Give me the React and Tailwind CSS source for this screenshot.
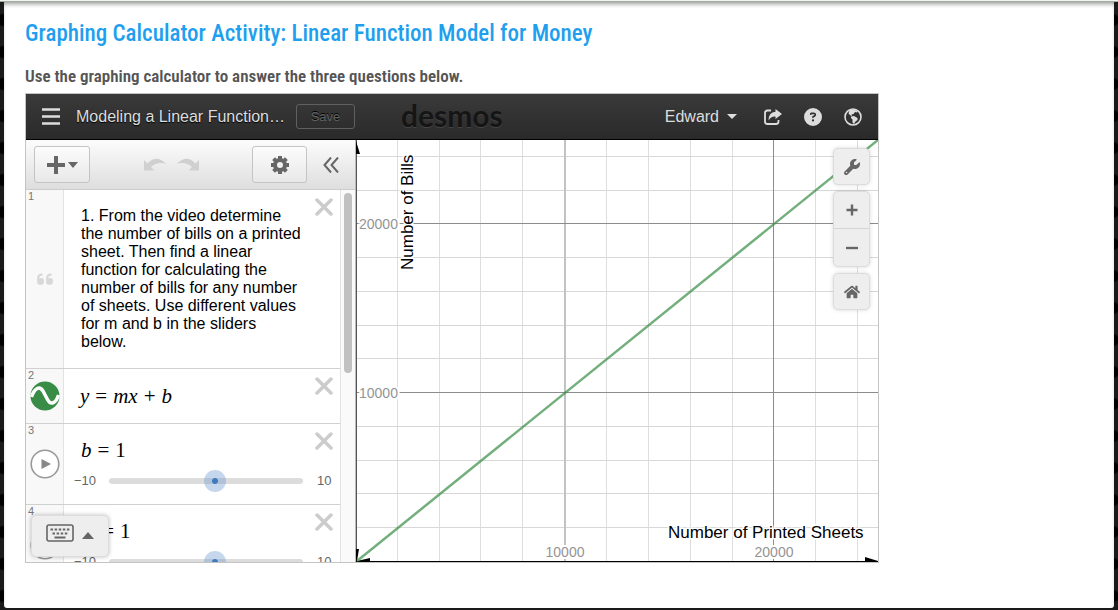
import { useState } from "react";
import { FaHome } from "react-icons/fa";
import { FaGear, FaWrench, FaCircleQuestion, FaQuoteLeft } from "react-icons/fa6";

const MINOR_X = [41, 83, 124, 166, 250, 292, 334, 376, 459, 501];
const MINOR_Y = [16, 50, 117, 151, 185, 218, 286, 320, 353, 387];

function Graph() {
  return (
    <svg
      viewBox="0 0 522 422"
      preserveAspectRatio="xMinYMax slice"
      className="absolute inset-0 h-full w-full"
      role="img"
      aria-label="Number of bills against number of printed sheets"
      fontFamily="'Liberation Sans', Arial, sans-serif"
    >
      {MINOR_X.map((x) => (
        <line key={x} x1={x + 0.5} x2={x + 0.5} y1="0" y2="421" stroke="#dedede" />
      ))}
      {MINOR_Y.map((y) => (
        <line key={y} x1="0" x2="522" y1={y + 0.5} y2={y + 0.5} stroke="#d8d8d8" />
      ))}
      <line x1="209" x2="209" y1="0" y2="421" stroke="#c2c2c2" strokeWidth="2" />
      <line x1="417.5" x2="417.5" y1="0" y2="421" stroke="#8c8c8c" />
      <line x1="0" x2="522" y1="83.5" y2="83.5" stroke="#8c8c8c" />
      <line x1="0" x2="522" y1="252.5" y2="252.5" stroke="#8c8c8c" />
      <path d="M0.5 0V422" stroke="#555" />
      <path d="M0 421.5H522" stroke="#000" />
      <path d="M0 1V14H4Z M0 409H3L1 421H0Z M1 421L14 418V422Z M509 417L522 421H509Z" fill="#000" />
      <path d="M1 421L522 0" stroke="#388c46" strokeOpacity="0.7" strokeWidth="2.5" />
      <g fontSize="14" fill="#949494" stroke="#fff" strokeWidth="4" strokeLinejoin="round" paintOrder="stroke">
        <text x="3" y="89">20000</text>
        <text x="3" y="258">10000</text>
        <text x="209" y="417" textAnchor="middle">10000</text>
        <text x="418" y="417" textAnchor="middle">20000</text>
      </g>
      <g fontSize="17" fill="#000" stroke="#fff" strokeWidth="3" strokeLinejoin="round" paintOrder="stroke">
        <text x="312" y="398">Number of Printed Sheets</text>
        <text transform="translate(57 130) rotate(-90)">Number of Bills</text>
      </g>
    </svg>
  );
}

function ShareIcon() {
  return (
    <svg viewBox="0 0 20 18" className="h-[18px] w-5" fill="none">
      <path d="M8 2.500H4.500Q2 2.500 2 5V13.500Q2 16 4.500 16H13Q15.500 16 15.500 13.500V12" stroke="#ddd" strokeWidth="1.800" />
      <path d="M12.500 1L19 6L12.500 11V8.500Q8 8 5.500 12.500Q5.500 4.500 12.500 3.800Z" fill="#ddd" />
    </svg>
  );
}

function GlobeIcon() {
  return (
    <svg viewBox="0 0 18 18" className="h-[18px] w-[18px]">
      <circle cx="9" cy="9" r="8" fill="none" stroke="#ddd" strokeWidth="1.600" />
      <path d="M5.500 2L10 1.500L13.500 3L13 4.500L11 4L9.500 6L7.500 6.500L8 8L6.500 7.500L4.500 5.500Z" fill="#ddd" />
      <path d="M7 8.500L10 8L13.500 10L13.500 12L11.500 13.500L10 16L8.500 14.500L8.500 11.500L7 10Z" fill="#ddd" />
    </svg>
  );
}

function CurvedArrow({ flip }) {
  return (
    <svg viewBox="0 0 22 13" className={flip ? "h-[13px] w-[22px] -scale-x-100" : "h-[13px] w-[22px]"}>
      <path d="M0 2V12.500H10.500L7 9Q13 3.500 22 5.500Q12 -4 3.500 5.500Z" fill="#d0d0d0" />
    </svg>
  );
}

function CloseButton({ label }) {
  return (
    <button type="button" aria-label={label} className="absolute top-[7px] right-1.5 p-px">
      <svg viewBox="0 0 18 18" className="h-[18px] w-[18px]">
        <path d="M2 2L16 16M16 2L2 16" stroke="#ccc" strokeWidth="3.500" strokeLinecap="round" />
      </svg>
    </button>
  );
}

function Row({ number, icon, height, children }) {
  return (
    <li className={`relative flex shrink-0 border-b border-[#d0d0d0] ${height}`}>
      <div className="relative flex w-[38px] shrink-0 items-center justify-center border-r border-[#e2e2e2] bg-[#f8f8f8]">
        <span className="absolute top-0 left-0.5 text-[11px] leading-3 text-[#777]">{number}</span>
        {icon}
      </div>
      <div className="min-w-0 flex-1">{children}</div>
      <CloseButton label={`Delete expression ${number}`} />
    </li>
  );
}

function PlayButton({ label }) {
  return (
    <button type="button" aria-label={label} className="flex">
      <svg viewBox="0 0 30 30" className="h-[30px] w-[30px]">
        <circle cx="15" cy="15" r="13.800" fill="#fff" stroke="#999" strokeWidth="1.600" />
        <path d="M11.500 10L21 15L11.500 20Z" fill="#888" />
      </svg>
    </button>
  );
}

function SliderRow({ number, name }) {
  const [value, setValue] = useState(1);
  return (
    <Row number={number} height="h-[81px]" icon={<PlayButton label={`Play ${name}`} />}>
      <div className="flex gap-1.5 pt-3.5 pl-[17px] font-['Liberation_Serif',serif] text-[21px] leading-6">
        <i>{name}</i><span>=</span><span>{value}</span>
      </div>
      <div className="flex items-center pt-2 pl-[10px] text-[13px] leading-[22px] text-[#666]">
        <span className="w-[35px]">−10</span>
        <input
          type="range"
          min="-10"
          max="10"
          value={value}
          aria-label={`Value of ${name}`}
          onChange={(e) => setValue(Number(e.target.value))}
          className="h-[22px] w-[194px] appearance-none bg-transparent [&::-webkit-slider-runnable-track]:h-1.5 [&::-webkit-slider-runnable-track]:rounded-full [&::-webkit-slider-runnable-track]:bg-[#dcdcdc] [&::-webkit-slider-thumb]:-mt-2 [&::-webkit-slider-thumb]:h-[22px] [&::-webkit-slider-thumb]:w-[22px] [&::-webkit-slider-thumb]:appearance-none [&::-webkit-slider-thumb]:rounded-full [&::-webkit-slider-thumb]:bg-[radial-gradient(circle,#3f7abf_2.5px,#6f9bd066_3.5px)]"
        />
        <span className="pl-3.5">10</span>
      </div>
    </Row>
  );
}

const toolButton = "flex items-center justify-center rounded-[3px] border border-[#c4c4c4] bg-linear-to-b from-[#fcfcfc] to-[#e8e8e8] text-[#666]";
const mapGroup = "rounded-[5px] border border-[#dcdcdc] bg-[#eee] shadow-[0_0_4px_rgba(0,0,0,0.15)]";
const mapButton = "flex w-[35px] items-center justify-center text-[#666]";

export default function App() {
  return (
    <div className="flex min-h-screen flex-col bg-[#1a1a1a] bg-[radial-gradient(circle_at_3px_20px,#000_5px,#33333300_7px)] bg-[length:37px_32px] font-['Liberation_Sans',Arial,sans-serif]">
      <div className="h-0.5 border-b border-[#a5aaa5] bg-[#f2f4f0]" />
      <main className="mx-1 mb-0.5 flex-1 rounded-b-[3px] bg-white px-[21px] pb-10 shadow-[inset_0_4px_4px_-2px_rgba(0,0,0,0.4)]">
        <h1 className="pt-[18px] font-['Roboto_Condensed',Roboto,sans-serif] text-[23px] leading-7 font-medium text-[#1f9fee]">
          Graphing Calculator Activity: Linear Function Model for Money
        </h1>
        <p className="pt-[18px] pb-[7px] font-['Roboto_Condensed',Roboto,sans-serif] text-[17px] leading-5 font-semibold text-[#555]">
          Use the graphing calculator to answer the three questions below.
        </p>

        <section className="max-w-[854px] border border-[#c4c4c4]">
          <header className="flex h-[46px] items-center border-b border-black bg-linear-to-b from-[#3a3a3a] to-[#2a2a2a] text-[#ddd]">
            <button type="button" aria-label="Menu" className="ml-4 flex">
              <svg viewBox="0 0 18 17" className="h-[17px] w-[18px]"><path d="M0 1.500H18M0 8.500H18M0 15.500H18" stroke="#ddd" strokeWidth="2.500" /></svg>
            </button>
            <h2 className="ml-4 text-[16px] leading-5 whitespace-nowrap [text-shadow:0_1px_1px_#000]">Modeling a Linear Function…</h2>
            <button type="button" className="ml-[11px] h-[25px] w-[59px] rounded-[3px] border border-[#606060] text-[13px] text-[#626262] [text-shadow:0_-1px_0_#000]">Save</button>
            <a href="#desmos" className="ml-[46px] -mt-1 font-[Lato,sans-serif] text-[30px] leading-9 font-bold text-[#151515] [text-shadow:0_1px_0_#444]">desmos</a>
            <button type="button" className="ml-auto flex items-center gap-2 text-[16px]">
              Edward <svg viewBox="0 0 10 5" className="h-[5px] w-2.5"><path d="M0 0H10L5 5Z" fill="#ddd" /></svg>
            </button>
            <button type="button" aria-label="Share" className="ml-[26px]"><ShareIcon /></button>
            <button type="button" aria-label="Help" className="ml-[21px]"><FaCircleQuestion size={18} /></button>
            <button type="button" aria-label="Language" className="mr-4 ml-[22px]"><GlobeIcon /></button>
          </header>

          <div className="flex h-[422px]">
            <aside className="relative flex w-[330px] shrink-0 flex-col overflow-hidden border-r border-[#bbb]">
              <div className="flex h-[50px] shrink-0 items-center border-b border-[#ccc] bg-linear-to-b from-[#fcfcfc] to-[#dedede] pr-4 pl-2">
                <button type="button" aria-label="Add item" className={`${toolButton} h-[37px] w-14 gap-[3px]`}>
                  <svg viewBox="0 0 18 18" className="h-[18px] w-[18px]"><path d="M9 1.500V16.500M1.500 9H16.500" stroke="#666" strokeWidth="4" strokeLinecap="square" strokeLinejoin="round" /></svg>
                  <svg viewBox="0 0 10 6" className="h-1.5 w-2.5"><path d="M0 0H10L5 6Z" fill="#666" /></svg>
                </button>
                <div className="mx-auto flex gap-[11px]">
                  <button type="button" aria-label="Undo"><CurvedArrow /></button>
                  <button type="button" aria-label="Redo"><CurvedArrow flip /></button>
                </div>
                <button type="button" aria-label="Settings" className={`${toolButton} h-[37px] w-[55px]`}>
                  <svg viewBox="-10 -10 20 20" className="h-5 w-5">
                    <circle r="5" fill="none" stroke="#666" strokeWidth="4" />
                    <path d="M0 -9V-6M0 9V6M-9 0H-6M9 0H6M-6.400 -6.400L-4.500 -4.500M6.400 6.400L4.500 4.500M-6.400 6.400L-4.500 4.500M6.400 -6.400L4.500 -4.500" stroke="#666" strokeWidth="4" />
                  </svg>
                </button>
                <button type="button" aria-label="Hide list" className="ml-4">
                  <svg viewBox="0 0 16 16" className="h-4 w-4" fill="none"><path d="M8 0.500L1.500 8L8 15.500M15 0.500L8.500 8L15 15.500" stroke="#666" strokeWidth="2" /></svg>
                </button>
              </div>

              <div className="flex min-h-0 flex-1">
                <ol className="flex min-w-0 flex-1 flex-col overflow-hidden bg-white">
                  <Row number="1" height="h-[179px]" icon={<FaQuoteLeft size={18} className="text-[#d8d8d8]" />}>
                    <p className="pt-[17px] pr-[38px] pl-[17px] text-[16px] leading-[18px] text-black">
                      1. From the video determine the number of bills on a printed sheet. Then find a linear function for calculating the number of bills for any number of sheets. Use different values for m and b in the sliders below.
                    </p>
                  </Row>
                  <Row
                    number="2"
                    height="h-[55px]"
                    icon={
                      <svg viewBox="0 0 30 30" className="h-[30px] w-[30px]">
                        <circle cx="15" cy="15" r="14.500" fill="#388c46" />
                        <path d="M1.500 16C4 8 9.500 4 13 10L17.500 18.500C21 25 26 22 28.500 14" fill="none" stroke="#fff" strokeWidth="3.500" />
                      </svg>
                    }
                  >
                    <div className="flex gap-1.5 pt-[15px] pl-4 font-['Liberation_Serif',serif] text-[21px] leading-6">
                      <i>y</i><span>=</span><i>mx</i><span>+</span><i>b</i>
                    </div>
                  </Row>
                  <SliderRow number="3" name="b" />
                  <SliderRow number="4" name="m" />
                </ol>
                <div className="w-[15px] shrink-0 border-l border-[#e2e2e2] bg-[#fafafa] px-[3px] pt-[3px]">
                  <div className="h-[180px] w-2 rounded-full bg-[#c1c1c1]" />
                </div>
              </div>

              <button type="button" aria-label="Show keyboard" className="absolute bottom-[5px] left-[5px] flex h-[42px] w-[78px] items-center justify-center gap-2 rounded-[5px] border border-[#ddd] bg-[#eee] pb-1.5 shadow-[0_0_4px_rgba(0,0,0,0.25)]">
                <svg viewBox="0 0 28 18" className="h-[18px] w-7" fill="none">
                  <rect x="1" y="1" width="26" height="16" rx="2" stroke="#666" strokeWidth="1.600" />
                  <path d="M4.500 5.500H24M6.500 9.500H22" stroke="#666" strokeWidth="2" strokeDasharray="2.500 1.600" />
                  <path d="M8.500 13.500H19.500" stroke="#666" strokeWidth="2" />
                </svg>
                <svg viewBox="0 0 12 7" className="mt-1 h-[7px] w-3"><path d="M0 7H12L6 0Z" fill="#666" /></svg>
              </button>
            </aside>

            <div className="relative min-w-0 flex-1 overflow-hidden bg-white">
              <Graph />
              <div className="absolute top-2 right-2 flex flex-col gap-1.5">
                <div className={mapGroup}>
                  <button type="button" aria-label="Graph settings" className={`${mapButton} h-[35px]`}><FaWrench size={16} /></button>
                </div>
                <div className={`${mapGroup} divide-y divide-[#d4d4d4]`}>
                  <button type="button" aria-label="Zoom in" className={`${mapButton} h-[37px]`}>
                    <svg viewBox="0 0 12 12" className="h-3 w-3"><path d="M6 0.500V11.500M0.500 6H11.500" stroke="#666" strokeWidth="2.400" /></svg>
                  </button>
                  <button type="button" aria-label="Zoom out" className={`${mapButton} h-[37px]`}>
                    <svg viewBox="0 0 12 12" className="h-3 w-3"><path d="M0 6H12" stroke="#666" strokeWidth="2.400" /></svg>
                  </button>
                </div>
                <div className={mapGroup}>
                  <button type="button" aria-label="Default view" className={`${mapButton} h-[35px]`}><FaHome size={16} /></button>
                </div>
              </div>
            </div>
          </div>
        </section>
      </main>
    </div>
  );
}
